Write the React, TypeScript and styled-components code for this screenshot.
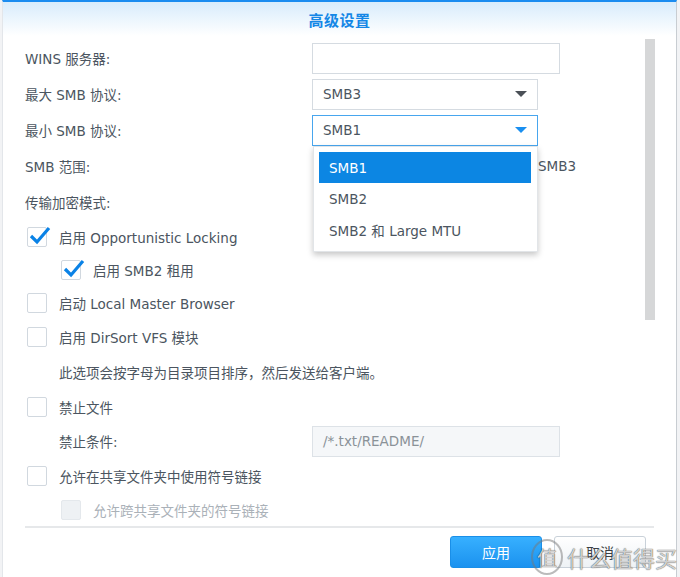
import React from 'react';
import styled, { createGlobalStyle } from 'styled-components';

const GlobalStyle = createGlobalStyle`
  html, body {
    margin: 0;
    padding: 0;
    background: #ffffff;
  }
  body {
    font-family: "DejaVu Sans", "Noto Sans CJK SC", sans-serif;
    font-size: 13.5px;
    color: #4b5560;
  }
`;

const Page = styled.div`
  width: 680px;
  height: 577px;
  display: flex;
  background: #f2f3f5;
  overflow: hidden;
`;

const Dialog = styled.div`
  position: relative;
  margin-left: 2px;
  width: 675px;
  height: 577px;
  display: flex;
  flex-direction: column;
  background: #ffffff;
  border-left: 1px solid #e3e6ea;
  border-right: 1px solid #c8cdd2;
  border-top: 2px solid #1b8cf0;
  box-sizing: border-box;
`;

const Header = styled.div`
  height: 34px;
  display: flex;
  align-items: center;
  justify-content: center;
  background: linear-gradient(to bottom, #d8ecfc, #ffffff);
`;

const Title = styled.h1`
  margin: 0;
  font-size: 15px;
  font-weight: bold;
  color: #1587e6;
  letter-spacing: 0.5px;
`;

const Body = styled.div`
  flex: 1;
  display: flex;
  min-height: 0;
`;

const Form = styled.div`
  position: relative;
  flex: 1;
  padding: 4px 0 0 22px;
`;

const ScrollTrack = styled.div`
  width: 10px;
  padding-top: 3px;
  margin-right: 21px;
`;

const ScrollThumb = styled.div`
  width: 10px;
  height: 281px;
  background: #d6d7d8;
`;

const FieldRow = styled.div<{ $h?: number }>`
  height: ${p => p.$h || 36}px;
  display: flex;
  align-items: center;
`;

const Label = styled.div<{ $indent?: number }>`
  width: ${p => 287 - (p.$indent || 0)}px;
  padding-left: ${p => p.$indent || 0}px;
  flex-shrink: 0;
  white-space: nowrap;
`;

const TextInput = styled.div<{ $disabled?: boolean }>`
  width: 248px;
  height: 31px;
  box-sizing: border-box;
  border: 1px solid ${p => (p.$disabled ? '#dde2e7' : '#d5dbe1')};
  background: ${p => (p.$disabled ? '#f5f7f9' : '#ffffff')};
  color: #8a9298;
  display: flex;
  align-items: center;
  padding-left: 10px;
`;

const SelectBox = styled.div<{ $focused?: boolean }>`
  width: 226px;
  height: 31px;
  box-sizing: border-box;
  border: 1px solid ${p => (p.$focused ? '#48a6ee' : '#d5dbe1')};
  display: flex;
  align-items: center;
  justify-content: space-between;
  padding: 0 10px;
  color: #4b5560;
`;

const Caret = styled.span<{ $color: string }>`
  width: 0;
  height: 0;
  border-left: 6px solid transparent;
  border-right: 6px solid transparent;
  border-top: 6px solid ${p => p.$color};
`;

const RangeValue = styled.div`
  width: 264px;
  text-align: right;
`;

const Menu = styled.div`
  position: absolute;
  top: 110px;
  left: 310px;
  width: 225px;
  padding: 5px 6px 6px 5px;
  box-sizing: border-box;
  background: #ffffff;
  border: 1px solid #e2e5e8;
  box-shadow: 0 3px 6px rgba(0, 0, 0, 0.22);
  z-index: 5;
`;

const MenuItem = styled.div<{ $active?: boolean }>`
  height: 31px;
  display: flex;
  align-items: center;
  padding-left: 10px;
  background: ${p => (p.$active ? '#0c86e3' : 'transparent')};
  color: ${p => (p.$active ? '#ffffff' : '#4b5560')};
`;

const CheckRow = styled.div<{ $indent?: number; $h?: number }>`
  height: ${p => p.$h || 34}px;
  display: flex;
  align-items: center;
  padding-left: ${p => p.$indent || 0}px;
`;

const Box = styled.span<{ $disabled?: boolean }>`
  position: relative;
  width: 20px;
  height: 20px;
  box-sizing: border-box;
  border: 1px solid ${p => (p.$disabled ? '#e4e8ec' : '#d1d8df')};
  background: ${p => (p.$disabled ? '#eef1f4' : '#ffffff')};
  border-radius: 2px;
  margin-right: 12px;
  margin-left: 2px;
  flex-shrink: 0;
`;

const CheckMark = styled.svg`
  position: absolute;
  left: 1px;
  top: -3px;
`;

const CheckText = styled.span<{ $disabled?: boolean }>`
  color: ${p => (p.$disabled ? '#aab1b8' : '#4b5560')};
  white-space: nowrap;
`;

const Note = styled.div`
  height: 36px;
  display: flex;
  align-items: center;
  padding-left: 34px;
  white-space: nowrap;
`;

const Footer = styled.div`
  height: 51px;
  box-sizing: border-box;
  margin: 0 22px;
  border-top: 2px solid #e6e8ea;
  display: flex;
  justify-content: flex-end;
  align-items: flex-start;
  padding-top: 8px;
  padding-right: 8px;
  gap: 12px;
`;

const Button = styled.button<{ $primary?: boolean }>`
  width: 92px;
  height: 32px;
  border-radius: 3px;
  font-family: "DejaVu Sans", "Noto Sans CJK SC", sans-serif;
  font-size: 14px;
  cursor: pointer;
  border: 1px solid ${p => (p.$primary ? '#1a8fe8' : '#c9d1d9')};
  background: ${p =>
    p.$primary
      ? 'linear-gradient(to bottom, #37b0ff, #1b92ef)'
      : 'linear-gradient(to bottom, #ffffff, #eef2f5)'};
  color: ${p => (p.$primary ? '#ffffff' : '#3a3f44')};
`;

const Watermark = styled.div`
  position: absolute;
  right: -1px;
  bottom: 2px;
  display: flex;
  align-items: center;
  gap: 4px;
  font-size: 22px;
  color: rgba(255, 255, 255, 0.75);
  text-shadow: 0 0 1px rgba(0, 0, 0, 0.55), 0 0 1px rgba(0, 0, 0, 0.55);
  pointer-events: none;
`;

const Seal = styled.span`
  width: 28px;
  height: 32px;
  border-radius: 50%;
  border: 2px solid rgba(120, 120, 120, 0.5);
  display: flex;
  align-items: center;
  justify-content: center;
  font-size: 20px;
`;

const Check: React.FC<{ checked?: boolean; disabled?: boolean }> = ({ checked, disabled }) => (
  <Box $disabled={disabled}>
    {checked && (
      <CheckMark width="22" height="20" viewBox="0 0 22 20">
        <path d="M2 11 L8 17 L20 3" fill="none" stroke="#0a82e6" strokeWidth="3.2" />
      </CheckMark>
    )}
  </Box>
);

const App: React.FC = () => {
  return (
    <Page>
      <GlobalStyle />
      <Dialog>
        <Header>
          <Title>高级设置</Title>
        </Header>
        <Body>
          <Form>
            <FieldRow>
              <Label>WINS 服务器:</Label>
              <TextInput />
            </FieldRow>
            <FieldRow>
              <Label>最大 SMB 协议:</Label>
              <SelectBox>
                SMB3
                <Caret $color="#4b5057" />
              </SelectBox>
            </FieldRow>
            <FieldRow>
              <Label>最小 SMB 协议:</Label>
              <SelectBox $focused>
                SMB1
                <Caret $color="#1a8ff0" />
              </SelectBox>
            </FieldRow>
            <FieldRow>
              <Label>SMB 范围:</Label>
              <RangeValue>SMB3</RangeValue>
            </FieldRow>
            <FieldRow>
              <Label>传输加密模式:</Label>
            </FieldRow>
            <CheckRow $h={33}>
              <Check checked />
              <CheckText>启用 Opportunistic Locking</CheckText>
            </CheckRow>
            <CheckRow $indent={34} $h={33}>
              <Check checked />
              <CheckText>启用 SMB2 租用</CheckText>
            </CheckRow>
            <CheckRow>
              <Check />
              <CheckText>启动 Local Master Browser</CheckText>
            </CheckRow>
            <CheckRow>
              <Check />
              <CheckText>启用 DirSort VFS 模块</CheckText>
            </CheckRow>
            <Note>此选项会按字母为目录项目排序，然后发送给客户端。</Note>
            <CheckRow>
              <Check />
              <CheckText>禁止文件</CheckText>
            </CheckRow>
            <FieldRow $h={34}>
              <Label $indent={34}>禁止条件:</Label>
              <TextInput $disabled>/*.txt/README/</TextInput>
            </FieldRow>
            <CheckRow $h={35}>
              <Check />
              <CheckText>允许在共享文件夹中使用符号链接</CheckText>
            </CheckRow>
            <CheckRow $indent={34}>
              <Check disabled />
              <CheckText $disabled>允许跨共享文件夹的符号链接</CheckText>
            </CheckRow>
            <Menu>
              <MenuItem $active>SMB1</MenuItem>
              <MenuItem>SMB2</MenuItem>
              <MenuItem>SMB2 和 Large MTU</MenuItem>
            </Menu>
          </Form>
          <ScrollTrack>
            <ScrollThumb />
          </ScrollTrack>
        </Body>
        <Footer>
          <Button $primary>应用</Button>
          <Button>取消</Button>
        </Footer>
        <Watermark>
          <Seal>值</Seal>
          什么值得买
        </Watermark>
      </Dialog>
    </Page>
  );
};

export default App;
